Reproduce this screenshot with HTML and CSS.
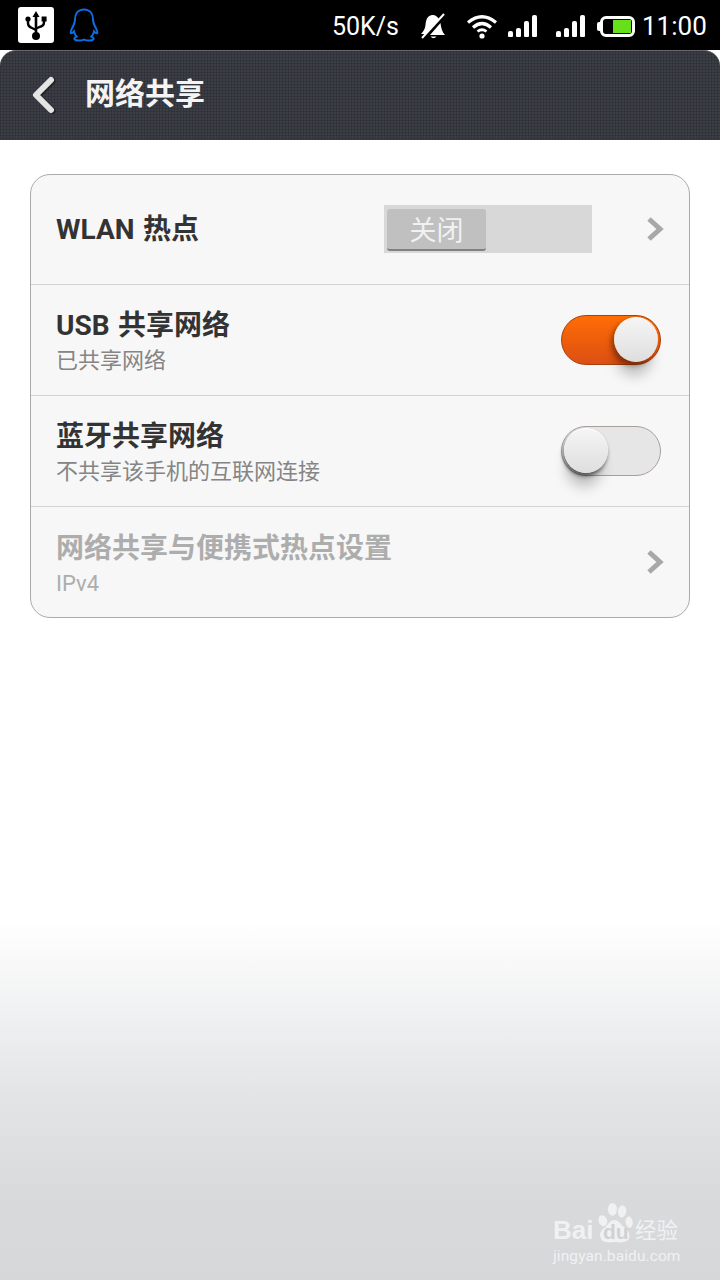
FILE: index.html
```html
<!DOCTYPE html>
<html lang="zh-CN">
<head>
    <meta charset="UTF-8">
    <meta name="viewport" content="width=device-width, initial-scale=1.0">
    <title>网络共享</title>
    <link rel="stylesheet" href="styles.css">
</head>
<body>

<!-- Status bar -->
<div class="status-bar">
    <div class="status-left">
        <div class="usb-icon">
            <svg width="36" height="36" viewBox="0 0 36 36">
                <path d="M18 4 L14.5 10 H21.5 Z" fill="#000"/>
                <path d="M18 9 V27" stroke="#000" stroke-width="2.6" fill="none"/>
                <circle cx="18" cy="29" r="4" fill="#000"/>
                <path d="M10 13 V16 Q10 19.5 13 20.5 L18 23" stroke="#000" stroke-width="2.4" fill="none"/>
                <circle cx="10" cy="12" r="2.6" fill="#000"/>
                <path d="M26 14 V15.5 Q26 18.5 23 19.5 L18 21.5" stroke="#000" stroke-width="2.4" fill="none"/>
                <rect x="23.6" y="9.5" width="5" height="5" fill="#000"/>
            </svg>
        </div>
        <svg class="qq-icon" width="30" height="34" viewBox="0 0 30 34">
            <path d="M15 1.5 C8.5 1.5 6 6.5 6 11.5 C6 14 5.6 15 4.4 17.5 C2.6 21 1 24 1.8 25 C2.6 25.8 4 24.6 5 23.4 C5.6 26 6.5 27.6 7.6 28.6 C5.6 29.6 5 30.4 5.6 31.4 C6.6 32.8 11.6 33 15 31.6 C18.4 33 23.4 32.8 24.4 31.4 C25 30.4 24.4 29.6 22.4 28.6 C23.5 27.6 24.4 26 25 23.4 C26 24.6 27.4 25.8 28.2 25 C29 24 27.4 21 25.6 17.5 C24.4 15 24 14 24 11.5 C24 6.5 21.5 1.5 15 1.5 Z" fill="none" stroke="#0b6fe3" stroke-width="2"/>
        </svg>
    </div>
    <div class="status-right">
        <span class="net-speed">50K/s</span>
        <svg class="bell-icon" width="26" height="28" viewBox="0 0 26 28">
            <path d="M12 3 C7 4 6 8 5.5 13 C5 17 3.5 19.5 1 22 L6 22 L19 7 C17.5 4.5 15 2.6 12 3 Z" fill="#fff"/>
            <path d="M20.5 11 C21 15 22 20 25 23 H10 Z" fill="#fff"/>
            <path d="M10.5 24.5 Q13.5 28 16.5 24.5 Z" fill="#fff"/>
            <path d="M2 26 L24 2" stroke="#fff" stroke-width="2"/>
        </svg>
        <svg class="wifi-icon" width="32" height="26" viewBox="0 0 32 26">
            <path d="M2 9.5 Q16 -2 30 9.5" fill="none" stroke="#fff" stroke-width="3.2"/>
            <path d="M7 14.5 Q16 6.5 25 14.5" fill="none" stroke="#fff" stroke-width="3.2"/>
            <path d="M11.5 18.5 Q16 15 20.5 18.5" fill="none" stroke="#fff" stroke-width="2.8"/>
            <circle cx="16" cy="23" r="2.6" fill="#fff"/>
        </svg>
        <div class="signal">
            <span class="bar-1"></span><span class="bar-2"></span><span class="bar-3"></span><span class="bar-4"></span>
        </div>
        <div class="signal">
            <span class="bar-1"></span><span class="bar-2"></span><span class="bar-3"></span><span class="bar-4"></span>
        </div>
        <div class="battery"><div class="battery-fill"></div></div>
        <span class="clock">11:00</span>
    </div>
</div>

<!-- Action bar -->
<header class="action-bar">
    <svg class="back-icon" width="26" height="38" viewBox="0 0 26 38">
        <polyline points="21,4 6,19 21,34" fill="none" stroke="#000" stroke-opacity="0.35" stroke-width="6.5" stroke-linecap="round" stroke-linejoin="round" transform="translate(1.5 1)"/>
        <polyline points="21,4 6,19 21,34" fill="none" stroke="#e4e4e4" stroke-width="6" stroke-linecap="round" stroke-linejoin="round"/>
    </svg>
    <h1>网络共享</h1>
</header>

<!-- Settings list -->
<div class="settings-card">
    <div class="row">
        <div class="row-text">
            <div class="row-title">WLAN 热点</div>
        </div>
        <div class="ap-switch">
            <div class="ap-button">关闭</div>
        </div>
        <svg class="chevron" width="18" height="26" viewBox="0 0 18 26">
            <polyline points="3,3 14,13 3,23" fill="none" stroke="#a8a8a8" stroke-width="5"/>
        </svg>
    </div>
    <div class="row">
        <div class="row-text two-line">
            <div class="row-title">USB 共享网络</div>
            <div class="row-sub">已共享网络</div>
        </div>
        <div class="toggle on"><div class="knob"></div></div>
    </div>
    <div class="row">
        <div class="row-text two-line">
            <div class="row-title">蓝牙共享网络</div>
            <div class="row-sub">不共享该手机的互联网连接</div>
        </div>
        <div class="toggle off"><div class="knob"></div></div>
    </div>
    <div class="row disabled">
        <div class="row-text two-line">
            <div class="row-title">网络共享与便携式热点设置</div>
            <div class="row-sub">IPv4</div>
        </div>
        <svg class="chevron" width="18" height="26" viewBox="0 0 18 26">
            <polyline points="3,3 14,13 3,23" fill="none" stroke="#a8a8a8" stroke-width="5"/>
        </svg>
    </div>
</div>

<!-- Watermark -->
<div class="watermark">
    <div class="wm-logo">
        <span class="wm-bai">Bai</span>
        <svg class="wm-paw" viewBox="0 0 56 58" preserveAspectRatio="none">
            <ellipse cx="9" cy="25" rx="6.5" ry="8" transform="rotate(-25 9 25)" fill="#f1f1f2"/>
            <ellipse cx="24" cy="9" rx="7" ry="9" fill="#f1f1f2"/>
            <ellipse cx="39" cy="12" rx="6.5" ry="8.5" transform="rotate(10 39 12)" fill="#f1f1f2"/>
            <ellipse cx="50" cy="27" rx="5.5" ry="8" transform="rotate(-10 50 27)" fill="#f1f1f2"/>
            <path d="M27 24 C20 24 18 30 13 34 C6 39 3 43 6 50 C9 57 18 56 27 55 C36 56 47 57 50 50 C52 44 48 38 42 34 C36 30 34 24 27 24 Z" fill="#f1f1f2"/>
        </svg>
        <span class="wm-du">du</span>
        <span class="wm-jy">经验</span>
    </div>
    <div class="wm-url">jingyan.baidu.com</div>
</div>

</body>
</html>
```

FILE: styles.css
```css
/* Basic Reset */
* {
    margin: 0;
    padding: 0;
    box-sizing: border-box;
}

body {
    width: 720px;
    height: 1280px;
    overflow: hidden;
    position: relative;
    font-family: Roboto, "Noto Sans CJK SC", sans-serif;
    background: linear-gradient(to bottom, #ffffff 0, #ffffff 920px, #e4e5e7 1090px, #d9dadc 1190px, #d6d7d9 1280px);
}

/* Status bar */
.status-bar {
    height: 50px;
    background-color: #000;
    display: flex;
    justify-content: space-between;
    align-items: center;
    color: #fff;
}

.status-left {
    display: flex;
    align-items: center;
    padding-left: 18px;
    gap: 15px;
}

.usb-icon {
    width: 36px;
    height: 36px;
    background-color: #fff;
    border-radius: 3px;
}

.status-right {
    display: flex;
    align-items: center;
    padding: 2px 13px 0 0;
}

.net-speed {
    font-size: 25px;
    width: 69px;
}

.bell-icon {
    margin-left: 19px;
}

.wifi-icon {
    margin-left: 20px;
}

.signal {
    display: flex;
    align-items: flex-end;
    gap: 3px;
    height: 22px;
    margin-left: 10px;
    width: 29px;
}

.signal + .signal {
    margin-left: 19px;
}

.signal span {
    width: 5px;
    background-color: #fff;
    border-radius: 2px 2px 1px 1px;
}

.bar-1 { height: 6px; }
.bar-2 { height: 9px; }
.bar-3 { height: 16px; }
.bar-4 { height: 22px; }

.battery {
    position: relative;
    width: 35px;
    height: 21px;
    margin-left: 15px;
    border: 3px solid #fff;
    border-radius: 6px;
    padding: 1px 1px 1px 10px;
}

/* little cap on the left of the battery */
.battery::before {
    content: "";
    position: absolute;
    left: -6px;
    top: 3px;
    width: 3px;
    height: 9px;
    background-color: #fff;
    border-radius: 2px 0 0 2px;
}

.battery-fill {
    width: 100%;
    height: 100%;
    background-color: #66e01a;
}

.clock {
    font-size: 26px;
    margin-left: 7px;
    width: 65px;
}

/* Action bar */
.action-bar {
    height: 90px;
    display: flex;
    align-items: center;
    padding: 0 0 6px 30px;
    border-radius: 16px 16px 0 0;
    border-top: 1px solid #6a6b70;
    background-color: #3b3d45;
    background-image:
        linear-gradient(rgba(0, 0, 0, 0.12) 1px, transparent 1px),
        linear-gradient(90deg, rgba(0, 0, 0, 0.12) 1px, transparent 1px);
    background-size: 3px 3px;
}

.back-icon {
    margin-top: 4px;
}

.action-bar h1 {
    font-size: 30px;
    font-weight: 700;
    color: #f4f4f4;
    margin: 0 0 4px 29px;
}

/* Settings list */
.settings-card {
    margin: 34px 30px 0;
    height: 444px;
    background-color: #f7f7f7;
    border: 1px solid #aaaaaa;
    border-radius: 20px;
}

.row {
    height: 111px;
    display: flex;
    align-items: center;
    padding: 0 25px;
    border-bottom: 1px solid #d4d4d4;
}

.row:first-child {
    height: 110px;
}

.row:last-child {
    border-bottom: none;
}

.row-text {
    flex: 1;
}

.row-text.two-line {
    padding-top: 4px;
}

.row-title {
    height: 36px;
    font-size: 28px;
    font-weight: 700;
    line-height: 36px;
    word-spacing: 1.5px;
    color: #333333;
}

.row-sub {
    height: 30px;
    margin-top: 2px;
    font-size: 22px;
    line-height: 30px;
    color: #858585;
}

.disabled .row-title {
    color: #adadad;
}

.disabled .row-sub {
    color: #adadad;
}

.chevron {
    flex: none;
    margin-top: -2px;
}

/* WLAN switch */
.ap-switch {
    width: 208px;
    height: 48px;
    margin: -2px 54px 0 0;
    padding: 4px 0 0 3px;
    background-color: #d8d8d8;
}

.ap-button {
    width: 99px;
    height: 42px;
    background-color: #c0c0c0;
    border-bottom: 2px solid #808080;
    border-radius: 3px;
    color: #f1f1f1;
    font-size: 27px;
    line-height: 44px;
    text-align: center;
}

/* Toggles */
.toggle {
    position: relative;
    width: 100px;
    height: 50px;
    border-radius: 25px;
    margin-right: 3px;
}

.toggle.on {
    background: linear-gradient(to bottom, #ff6d05, #dc4f14);
    border: 1px solid #a4430f;
}

.toggle.off {
    background-color: #e6e6e6;
    border: 1px solid #a89f9b;
}

.knob {
    position: absolute;
    top: 1px;
    width: 44px;
    height: 45px;
    border-radius: 50%;
    background: linear-gradient(to bottom, #f5f5f5, #dedede);
    border-top: 1px solid #fff;
}

.toggle.on .knob {
    right: 2px;
    box-shadow: -3px 3px 5px rgba(90, 30, 0, 0.55), -2px 18px 14px -5px rgba(0, 0, 0, 0.25);
}

.toggle.off .knob {
    left: 2px;
    box-shadow: -1px 3px 4px rgba(0, 0, 0, 0.55), -2px 18px 14px -5px rgba(0, 0, 0, 0.25);
}

/* Watermark */
.watermark {
    position: absolute;
    left: 553px;
    top: 1203px;
    color: #f1f1f2;
}

.wm-logo {
    display: flex;
    align-items: flex-end;
    height: 41px;
    position: relative;
}

.wm-bai {
    font-family: "Liberation Sans", sans-serif;
    font-size: 26px;
    font-weight: 700;
    line-height: 30px;
    width: 44px;
    margin-bottom: -1px;
}

.wm-paw {
    width: 36px;
    height: 41px;
    flex: none;
}

.wm-du {
    position: absolute;
    left: 50px;
    bottom: 1px;
    font-family: "Liberation Sans", sans-serif;
    font-size: 21px;
    font-weight: 700;
    line-height: 22px;
    color: #d0d1d3;
}

.wm-jy {
    font-size: 21.5px;
    line-height: 26px;
    margin-left: 2px;
}

.wm-url {
    font-size: 15.5px;
    letter-spacing: 0.1px;
    line-height: 20px;
    margin-top: 2px;
}
```
